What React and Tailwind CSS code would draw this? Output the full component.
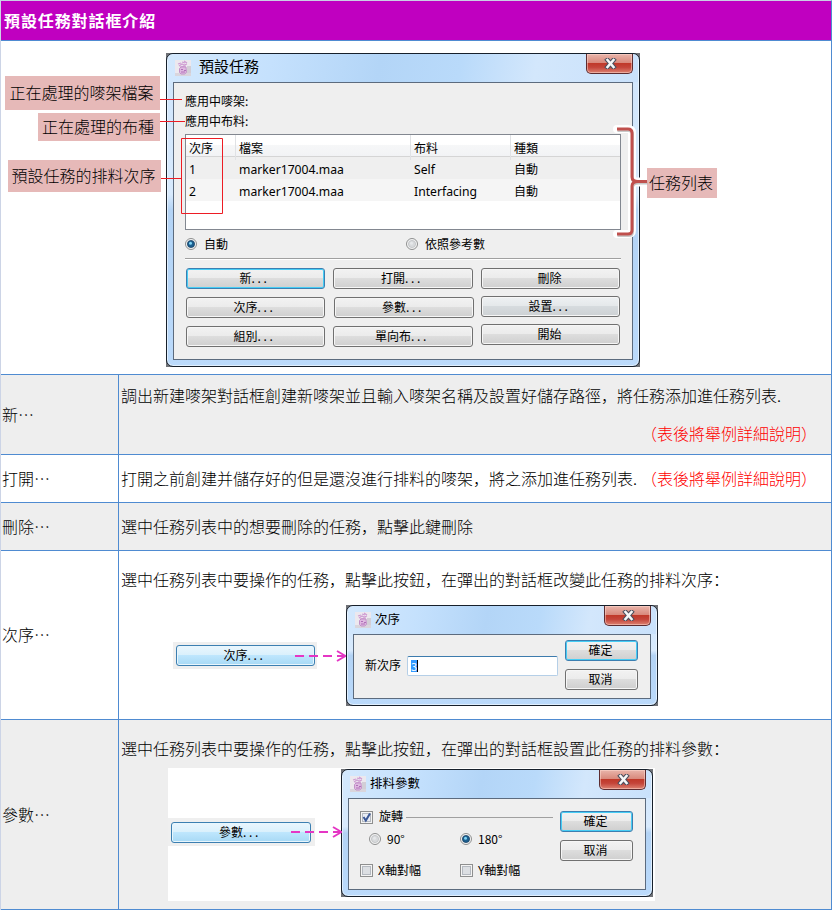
import React from "react";

function AppIcon() {
  return (
    <svg className="size-4 shrink-0" viewBox="0 0 16 16">
      <rect width="16" height="16" fill="#ece8ee" />
      <rect x="12" y="6" width="4" height="10" fill="#d2ced6" />
      <rect y="13" width="16" height="3" fill="#d9d5dc" />
      <path d="M3 4l3-1M7 2l3 1M9 1l3 2M4 6l3-2 2 1 3-1M5 7l6-1" stroke="#cf9bd2" fill="none" strokeWidth="1.200" />
      <path d="M4.500 8.500L6 7h5l.500 5.500-2 1.500h-3.500l-1.500-1.500z" fill="#dfb9e1" stroke="#c291c8" />
      <path d="M6 9.500h2M9 10.500h2M6 12h4" stroke="#b070b8" />
    </svg>
  );
}

function CloseButton() {
  return (
    <div className="flex h-[20px] w-[47px] items-center justify-center rounded-b-[5px] border border-t-0 border-[#5d2c30] bg-[linear-gradient(#e9b5ab_0%,#d98a7d_45%,#c0392a_50%,#c4453a_70%,#dd8272_100%)] shadow-[inset_0_0_0_1px_rgba(255,220,210,0.5)]">
      <svg className="mb-px ml-px h-[11px] w-[13px]" viewBox="0 0 13 11">
        <path d="M3.500 2l6 7M9.500 2l-6 7" stroke="#4b4f5e" strokeWidth="4.600" strokeLinecap="square" />
        <path d="M3.500 2l6 7M9.500 2l-6 7" stroke="#f7f7f7" strokeWidth="2.600" strokeLinecap="square" />
      </svg>
    </div>
  );
}

function Dialog({ title, className, titleClass, children }) {
  return (
    <div className={"shrink-0 bg-[#6f7176] font-normal " + className}>
      <div className="flex h-full flex-col rounded-[7px] border border-[#17202b] bg-[linear-gradient(#cfe5fc_0%,#d8eafd_45%,#b3d3f5_50%,#bbdafb_100%)] px-[6px] pb-[6px] shadow-[inset_0_0_0_1px_rgba(240,248,255,0.7)]">
        <div className="-mx-[5px] flex h-[28px] shrink-0 items-start rounded-t-[6px] bg-[linear-gradient(100deg,#d3e8fd_0%,#c5e1fd_22%,#b3d5f7_45%,#b9dafa_62%,#d3e7fc_78%,#c9e1fb_100%)] px-[5px]">
          <div className="pl-[2px] pt-[6px]">
            <AppIcon />
          </div>
          <div className={"grow whitespace-nowrap text-black " + titleClass}>{title}</div>
          <CloseButton />
        </div>
        <div className="min-h-0 grow border border-[#5c6b7e] bg-[#efefef]">{children}</div>
      </div>
    </div>
  );
}

const BUTTON_TONES = {
  normal: "border-[#707070] bg-[linear-gradient(#f2f2f2_0%,#ebebeb_49%,#dddddd_50%,#cfcfcf_100%)] shadow-[inset_0_0_0_1px_#f6f6f6]",
  cool: "border-[#707070] bg-[linear-gradient(#eef1f3_0%,#e4e8ea_49%,#d6dbde_50%,#cdd1d4_100%)] shadow-[inset_0_0_0_1px_#f6f6f6]",
  focus: "border-[#3c7fb1] bg-[linear-gradient(#f2f2f2_0%,#ebebeb_49%,#dddddd_50%,#cfcfcf_100%)] shadow-[inset_0_0_0_1px_#46cdf5]",
  hot: "border-[#3c7fb1] bg-[linear-gradient(#eaf6fd_0%,#d9f0fc_49%,#bee6fd_50%,#a7d9f5_100%)] shadow-[inset_0_0_0_1px_#e8f6fd]",
};

function Button({ label, dots, tone = "normal", className = "" }) {
  return (
    <div className={"flex h-[21px] shrink-0 items-center justify-center rounded-[3px] border pb-[2px] pr-[2px] text-[12px] font-normal leading-[17px] text-black " + BUTTON_TONES[tone] + " " + className}>
      <span>{label}</span>
      {dots && <span className="w-[18px] tracking-[2.700px]">...</span>}
    </div>
  );
}

function Radio({ checked }) {
  return (
    <svg className="size-3 shrink-0" viewBox="0 0 12 12">
      <circle cx="6" cy="6" r="5.500" fill="#f4f4f4" stroke="#8e8f8f" />
      <circle cx="6" cy="6" r="3.600" fill={checked ? "#1c5f8f" : "#d8dadc"} stroke={checked ? "#123a5c" : "#b9bcbf"} strokeWidth="0.700" />
      <circle cx="5.500" cy="5.200" r="1.500" fill={checked ? "#7fd4f5" : "#e6e8ea"} />
    </svg>
  );
}

function Checkbox({ checked }) {
  return (
    <svg className="size-[13px] shrink-0" viewBox="0 0 13 13">
      <rect x="0.500" y="0.500" width="12" height="12" fill="#f4f4f4" stroke="#8e8f8f" />
      <rect x="2.500" y="2.500" width="8" height="8" fill={checked ? "#e9edf5" : "#dcdfe3"} stroke="#b4b9c0" />
      {checked && <path d="M3.500 6l2.300 3.500L10 2.500" fill="none" stroke="#3b5896" strokeWidth="2" />}
    </svg>
  );
}

function Tag({ children, className }) {
  return (
    <div className={"flex items-center justify-center whitespace-nowrap bg-[#e6b9b8] pb-[2px] pr-[2px] text-[16px] leading-[20px] text-black " + className}>
      {children}
    </div>
  );
}

const COLS = "grid grid-cols-[50px_175px_100px_1fr]";

function TaskList() {
  const rows = [
    ["1", "marker17004.maa", "Self", "自動"],
    ["2", "marker17004.maa", "Interfacing", "自動"],
  ];
  return (
    <div className="h-[96px] w-[436px] border border-[#828790] bg-white text-[12px] text-black">
      <div className={COLS + " h-[22px] border-b border-[#d5d5d5] bg-[linear-gradient(#ffffff_45%,#f6f7f8_50%,#f2f3f5_100%)] leading-[25px]"}>
        {["次序", "檔案", "布料", "種類"].map((h, i) => (
          <div key={h} className={i < 3 ? "border-r border-[#e0e2e5] pl-[3px]" : "pl-[3px]"}>{h}</div>
        ))}
      </div>
      {rows.map((r, i) => (
        <div key={i} className={COLS + " h-[22px] " + (i ? "bg-[#f5f5f5]" : "bg-[#efefef]")}>
          {r.map((c, j) => (
            <div key={j} className={"pl-[3px] " + (j < 3 ? "font-['Noto_Sans','Noto_Sans_CJK_SC',sans-serif] text-[12.200px] leading-[26px]" : "leading-[23px]")}>{c}</div>
          ))}
        </div>
      ))}
    </div>
  );
}

function TaskDialog() {
  return (
    <Dialog title="預設任務" className="mt-[12px] h-[314px] w-[474px]" titleClass="pl-[8px] text-[15px] leading-[24px]">
      <div className="flex flex-col pl-[11px] pt-[8px] text-[12px] text-black">
        <div className="h-[20px] leading-[20px]">應用中嘜架:</div>
        <div className="h-[23px] leading-[20px]">應用中布料:</div>
        <TaskList />
        <div className="flex h-[28px] items-center leading-[28px]">
          <div className="flex w-[221px] items-center gap-[7px]"><Radio checked />自動</div>
          <div className="flex items-center gap-[7px]"><Radio />依照參考數</div>
        </div>
        <div className="h-[2px] w-[436px] border-t border-[#a0a0a0] bg-white" />
        <div className="flex pl-px pt-[8px]">
          <div className="flex w-[147px] flex-col gap-[8px]">
            <Button label="新" dots tone="focus" className="w-[139px]" />
            <Button label="次序" dots className="w-[139px]" />
            <Button label="組別" dots className="w-[139px]" />
          </div>
          <div className="flex w-[148px] flex-col gap-[8px]">
            <Button label="打開" dots className="w-[140px]" />
            <Button label="參數" dots className="ml-px w-[140px]" />
            <Button label="單向布" dots className="w-[140px]" />
          </div>
          <div className="flex flex-col gap-[7px]">
            <Button label="刪除" className="w-[139px]" />
            <Button label="設置" dots tone="cool" className="w-[139px]" />
            <Button label="開始" className="w-[139px]" />
          </div>
        </div>
      </div>
    </Dialog>
  );
}

function Annotations() {
  const bracket = "M617 129H628Q632 129 632 133V230Q632 234 628 234H617";
  const brace = "M617 129H628Q632 129 632 133V177Q632 181.500 638 181.500H647M638 181.500Q632 181.500 632 186V230Q632 234 628 234H617";
  return (
    <svg className="pointer-events-none absolute left-0 top-0 h-[333px] w-[830px]" viewBox="1 41 830 333" fill="none">
      <path d="M160 99.500H182M160 121.500H185M161 178.500H181M181.500 138.500H222.500V213.500H181.500Z" stroke="#ed1c24" />
      <path d={bracket} stroke="#ffffff" strokeWidth="8" strokeLinecap="round" />
      <path d="M632 182H646.500" stroke="#ffffff" strokeWidth="9" />
      <path d={brace} stroke="#9a9a9a" strokeOpacity="0.550" strokeWidth="3" transform="translate(0.500 1.500)" />
      <path d={brace} stroke="#c0504d" strokeWidth="3" />
    </svg>
  );
}

function Arrow() {
  return (
    <svg className="relative z-10 -ml-[22px] -mr-[18px] h-[14px] w-[51px] shrink-0" viewBox="0 0 51 14" fill="none" stroke="#e536c4">
      <path d="M0 7H50" strokeWidth="2" strokeDasharray="9 5" />
      <path d="M42 2L50.500 7L42 12" strokeWidth="2" />
    </svg>
  );
}

function Row({ name, gray, className, children }) {
  return (
    <div className={"flex border-b border-[#4f8bd1] text-[16px] text-black " + (gray ? "bg-[#eeeeee] " : "bg-white ") + className}>
      <div className="flex w-[118px] shrink-0 items-center border-r border-[#4f8bd1] pb-[2px] pl-px">{name}</div>
      <div className="flex min-w-0 grow flex-col pl-[2px]">{children}</div>
    </div>
  );
}

const Stop = () => <span className="inline-block w-2">.</span>;

export default function App() {
  return (
    <div lang="zh-Hans" className="h-[910px] w-[832px] overflow-hidden whitespace-nowrap border-l border-r border-t border-l-[#ccd4e6] border-r-[#4f8bd1] border-t-[#c9cfe4] bg-white font-['Noto_Sans_CJK_SC','Noto_Sans_CJK_TC',sans-serif] font-light">
      <div className="h-[40px] border-b border-[#4f8bd1] bg-[#c000c0] pl-[3px] text-[16px] font-bold leading-[38px] tracking-[0.900px] text-white">
        預設任務對話框介紹
      </div>

      <div className="relative flex h-[334px] items-start border-b border-[#4f8bd1]">
        <div className="flex w-[165px] shrink-0 flex-col items-end pt-[35px]">
          <Tag className="mr-[6px] h-[34px] w-[155px]">正在處理的嘜架檔案</Tag>
          <Tag className="mr-[6px] mt-[3px] h-[28px] w-[122px]">正在處理的布種</Tag>
          <Tag className="mr-[5px] mt-[19px] h-[32px] w-[153px]">預設任務的排料次序</Tag>
        </div>
        <TaskDialog />
        <Tag className="ml-[7px] mt-[127px] h-[30px] w-[70px]">任務列表</Tag>
        <Annotations />
      </div>

      <Row name="新…" gray className="h-[80px]">
        <div className="pt-[2px] leading-[36px]">
          調出新建嘜架對話框創建新嘜架並且輸入嘜架名稱及設置好儲存路徑，將任務添加進任務列表<Stop />
        </div>
        <div className="pr-[14px] pt-px text-right leading-[39px] text-[#ff0000]">（表後將舉例詳細說明）</div>
      </Row>

      <Row name="打開…" className="h-[48px]">
        <div className="leading-[46px]">
          打開之前創建并儲存好的但是還沒進行排料的嘜架，將之添加進任務列表<Stop />
          <span className="text-[#ff0000]">（表後將舉例詳細說明）</span>
        </div>
      </Row>

      <Row name="刪除…" gray className="h-[48px]">
        <div className="leading-[46px]">選中任務列表中的想要刪除的任務，點擊此鍵刪除</div>
      </Row>

      <Row name="次序…" className="h-[169px]">
        <div className="h-[54px] pt-[10px] leading-[36px]">
          選中任務列表中要操作的任務，點擊此按鈕，在彈出的對話框改變此任務的排料次序：
        </div>
        <div className="flex h-[101px] items-center pl-[52px]">
          <div className="h-[27px] w-[144px] shrink-0 bg-[#efefef] px-[3px] pt-[3px]">
            <Button label="次序" dots tone="hot" className="w-[139px]" />
          </div>
          <Arrow />
          <Dialog title="次序" className="ml-[18px] h-[101px] w-[312px]" titleClass="pl-[4px] text-[12.500px] leading-[26px]">
            <div className="flex pl-[11px] pt-[5px] text-[12px]">
              <div className="flex h-[51px] w-[200px] items-center">
                <span className="-mt-[2px] w-[42px]">新次序</span>
                <div className="flex h-[20px] w-[151px] items-center rounded-[2px] border border-[#b5cfe7] border-t-[#3d7bad] bg-white pl-[3px]">
                  <span className="h-[12px] w-[6px] bg-[#3399ff] text-center text-[11px] leading-[12px] text-white">3</span>
                  <span className="h-[12px] w-px bg-black" />
                </div>
              </div>
              <div className="flex flex-col gap-[8px]">
                <Button label="確定" tone="focus" className="w-[73px]" />
                <Button label="取消" className="w-[73px]" />
              </div>
            </div>
          </Dialog>
        </div>
      </Row>

      <Row name="參數…" gray className="h-[190px]">
        <div className="h-[48px] pt-[10px] leading-[36px]">
          選中任務列表中要操作的任務，點擊此按鈕，在彈出的對話框設置此任務的排料參數：
        </div>
        <div className="ml-[47px] flex h-[133px] w-[487px] items-start bg-white pt-px">
          <div className="mt-[49px] h-[28px] w-[147px] shrink-0 bg-[#efefef] pl-[3px] pt-[4px]">
            <Button label="參數" dots tone="hot" className="w-[140px]" />
          </div>
          <div className="-ml-[2px] mt-[56px] flex"><Arrow /></div>
          <Dialog title="排料參數" className="ml-[17px] h-[128px] w-[312px]" titleClass="pl-[4px] text-[12.500px] leading-[26px]">
            <div className="flex pl-[11px] pt-[11px] text-[12px] leading-[14px]">
              <div className="flex w-[200px] flex-col">
                <div className="flex h-[14px] items-center">
                  <Checkbox checked />
                  <span className="-mt-[2px] ml-[6px] w-[27px]">旋轉</span>
                  <div className="h-px w-[147px] bg-[#a0a0a0]" />
                </div>
                <div className="mt-[8px] flex h-[14px] items-center pl-[9px]">
                  <div className="flex w-[91px] items-center gap-[6px]"><Radio />90°</div>
                  <div className="flex items-center gap-[6px]"><Radio checked />180°</div>
                </div>
                <div className="mt-[17px] flex h-[14px] items-center">
                  <div className="flex w-[100px] items-center gap-[5px]"><Checkbox />X軸對幅</div>
                  <div className="flex items-center gap-[5px]"><Checkbox />Y軸對幅</div>
                </div>
              </div>
              <div className="flex flex-col gap-[8px] pt-px">
                <Button label="確定" tone="focus" className="w-[73px]" />
                <Button label="取消" className="w-[73px]" />
              </div>
            </div>
          </Dialog>
        </div>
      </Row>
    </div>
  );
}
